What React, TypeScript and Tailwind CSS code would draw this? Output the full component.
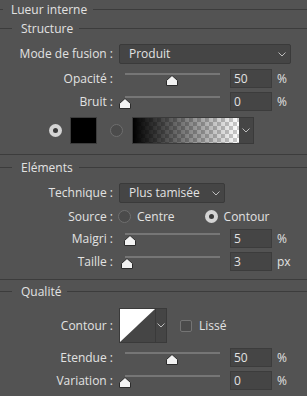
import { FC } from "react";

const Chevron: FC = () => (
  <svg width="8" height="5" viewBox="0 0 8 5" className="shrink-0">
    <path d="M0.5 0.5 L4 4 L7.5 0.5" fill="none" stroke="#bdbdbd" strokeWidth="1" />
  </svg>
);

const Thumb: FC = () => (
  <svg width="12" height="11" viewBox="0 0 12 11">
    <path d="M6 0.5 L11.5 5.5 V10.5 H0.5 V5.5 Z" fill="#f2f2f2" stroke="#2b2b2b" strokeWidth="1" />
  </svg>
);

const Header: FC<{ title: string; lead: number; gap: number; top?: boolean }> = ({ title, lead, gap, top }) => (
  <div className={`flex items-center ${top ? "h-[19px]" : "h-[20px]"}`}>
    <div className="h-px bg-[#3c3c3c] -mt-[1px]" style={{ width: lead }} />
    <span className="whitespace-nowrap" style={{ marginLeft: gap }}>
      {title}
    </span>
    <div className="h-px flex-1 bg-[#3c3c3c] ml-[6px] -mt-[1px]" />
  </div>
);

const Label: FC<{ text: string }> = ({ text }) => (
  <div className="w-[113px] shrink-0 text-right whitespace-nowrap">{text}</div>
);

const SliderRow: FC<{ label: string; value: string; unit: string; pos: number }> = ({ label, value, unit, pos }) => (
  <div className="flex items-center h-[19px]">
    <Label text={label} />
    <div className="relative w-[95px] h-[19px] ml-[12px] shrink-0">
      <div className="absolute top-[4px] left-0 right-0 h-[2px] bg-[#767676]" />
      <div className="absolute top-[6px]" style={{ left: pos - 6 }}>
        <Thumb />
      </div>
    </div>
    <div className="w-[42px] h-[19px] ml-[10px] bg-[#454545] border border-[#3c3c3c] flex items-center pl-[3px]">
      {value}
    </div>
    <span className="ml-[5px]">{unit}</span>
  </div>
);

const Select: FC<{ value: string; width: string }> = ({ value, width }) => (
  <div className={`${width} h-[20px] ml-[6px] bg-[#454545] border border-[#3a3a3a] rounded-[2px] flex items-center justify-between pl-[9px] pr-[4px]`}>
    <span>{value}</span>
    <Chevron />
  </div>
);

const Radio: FC<{ on?: boolean }> = ({ on }) =>
  on ? (
    <div className="w-[13px] h-[13px] rounded-full bg-[#d4d4d4] flex items-center justify-center shrink-0">
      <div className="w-[5px] h-[5px] rounded-full bg-[#3a3a3a]" />
    </div>
  ) : (
    <div className="w-[13px] h-[13px] rounded-full border border-[#6e6e6e] bg-[#4b4b4b] shrink-0" />
  );

const App: FC = () => {
  return (
    <div className="w-[307px] h-[396px] bg-[#535353] text-[#e2e2e2] text-[12px] font-['Open_Sans',sans-serif] overflow-hidden leading-none">
      <Header title="Lueur interne" lead={3} gap={8} top />
      <Header title="Structure" lead={12} gap={9} />

      <div className="flex items-center mt-[5px]">
        <Label text="Mode de fusion :" />
        <Select value="Produit" width="w-[172px]" />
      </div>

      <div className="mt-[5px]">
        <SliderRow label="Opacité :" value="50" unit="%" pos={47} />
      </div>
      <div className="mt-[4px]">
        <SliderRow label="Bruit :" value="0" unit="%" pos={0} />
      </div>

      <div className="flex items-center h-[27px] mt-[6px] pl-[49px]">
        <Radio on />
        <div className="w-[27px] h-[27px] ml-[8px] bg-black border border-[#3c3c3c]" />
        <div className="ml-[13px]">
          <Radio />
        </div>
        <div className="ml-[9px] h-[27px] w-[122px] flex border border-[#3a3a3a]">
          <div className="flex-1 bg-[image:repeating-conic-gradient(#ffffff_0_25%,#cccccc_0_50%)] bg-[length:8px_8px]">
            <div className="w-full h-full bg-linear-to-r from-black to-transparent" />
          </div>
          <div className="w-[14px] bg-[#454545] flex items-center justify-center">
            <Chevron />
          </div>
        </div>
      </div>

      <div className="h-px bg-[#3c3c3c] mt-[10px]" />

      <div className="mt-[3px]">
        <Header title="Eléments" lead={12} gap={9} />
      </div>

      <div className="flex items-center mt-[5px]">
        <Label text="Technique :" />
        <Select value="Plus tamisée" width="w-[106px]" />
      </div>

      <div className="flex items-center h-[19px] mt-[4px]">
        <Label text="Source :" />
        <div className="ml-[5px]">
          <Radio />
        </div>
        <span className="ml-[6px]">Centre</span>
        <div className="ml-[30px]">
          <Radio on />
        </div>
        <span className="ml-[6px]">Contour</span>
      </div>

      <div className="mt-[3px]">
        <SliderRow label="Maigri :" value="5" unit="%" pos={5} />
      </div>
      <div className="mt-[4px]">
        <SliderRow label="Taille :" value="3" unit="px" pos={2} />
      </div>

      <div className="h-px bg-[#3c3c3c] mt-[8px]" />

      <div className="mt-[2px]">
        <Header title="Qualité" lead={12} gap={9} />
      </div>

      <div className="flex items-center h-[35px] mt-[6px]">
        <Label text="Contour :" />
        <div className="ml-[6px] w-[48px] h-[35px] flex border border-[#3a3a3a]">
          <svg width="35" height="33" viewBox="0 0 35 33" className="shrink-0">
            <rect width="35" height="33" fill="#ffffff" />
            <path d="M0 33 L35 0 V33 Z" fill="#454545" />
          </svg>
          <div className="flex-1 bg-[#454545] border-l border-[#3a3a3a] flex items-center justify-center">
            <Chevron />
          </div>
        </div>
        <div className="ml-[13px] w-[12px] h-[12px] rounded-[2px] border border-[#747474] bg-[#4b4b4b]" />
        <span className="ml-[7px]">Lissé</span>
      </div>

      <div className="mt-[5px]">
        <SliderRow label="Etendue :" value="50" unit="%" pos={47} />
      </div>
      <div className="mt-[4px]">
        <SliderRow label="Variation :" value="0" unit="%" pos={0} />
      </div>
    </div>
  );
};

export default App;
